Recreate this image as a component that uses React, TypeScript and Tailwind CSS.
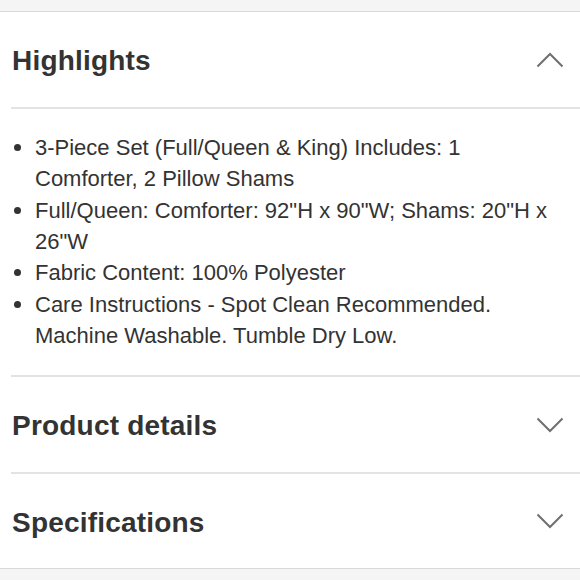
import React from 'react';

const highlights = [
  '3-Piece Set (Full/Queen & King) Includes: 1 Comforter, 2 Pillow Shams',
  'Full/Queen: Comforter: 92"H x 90"W; Shams: 20"H x 26"W',
  'Fabric Content: 100% Polyester',
  'Care Instructions - Spot Clean Recommended. Machine Washable. Tumble Dry Low.',
];

function Chevron({ up }: { up?: boolean }) {
  return (
    <svg width="28" height="16" viewBox="0 0 28 16" fill="none" className="shrink-0">
      <path
        d={up ? 'M1.5 14.5L14 2L26.5 14.5' : 'M1.5 1.5L14 14L26.5 1.5'}
        stroke="#6f6f6f"
        strokeWidth="2"
      />
    </svg>
  );
}

function SectionHeader({ title, open, last }: { title: string; open?: boolean; last?: boolean }) {
  return (
    <div
      className={
        'flex items-center justify-between pl-3 pr-[16px] ' + (last ? 'h-[94px]' : 'h-[95px]')
      }
    >
      <h2 className="pt-[3px] text-[28px] font-bold tracking-[0.2px] text-[#333333]">{title}</h2>
      <Chevron up={open} />
    </div>
  );
}

export default function App() {
  return (
    <div
      className="min-h-screen bg-[#f5f5f5] pt-[11px]"
      style={{ fontFamily: '"Liberation Sans", Arial, sans-serif' }}
    >
      <div className="border-y border-[#d9d9d9] bg-white">
        <SectionHeader title="Highlights" open />
        <div className="ml-[11px] border-t-2 border-[#e3e3e3]" />
        <ul className="pb-[24px] pl-3 pr-[20px] pt-[23px] text-[22px] leading-[31.33px] text-[#333333]">
          {highlights.map((h) => (
            <li key={h} className="flex">
              <span className="flex h-[31.33px] w-[23px] shrink-0 items-center">
                <span className="ml-[2px] h-[7px] w-[7px] rounded-full bg-[#333333]" />
              </span>
              <span>{h}</span>
            </li>
          ))}
        </ul>
        <div className="ml-[11px] border-t-2 border-[#e3e3e3]" />
        <SectionHeader title="Product details" />
        <div className="ml-[11px] border-t-2 border-[#e3e3e3]" />
        <SectionHeader title="Specifications" last />
      </div>
    </div>
  );
}
